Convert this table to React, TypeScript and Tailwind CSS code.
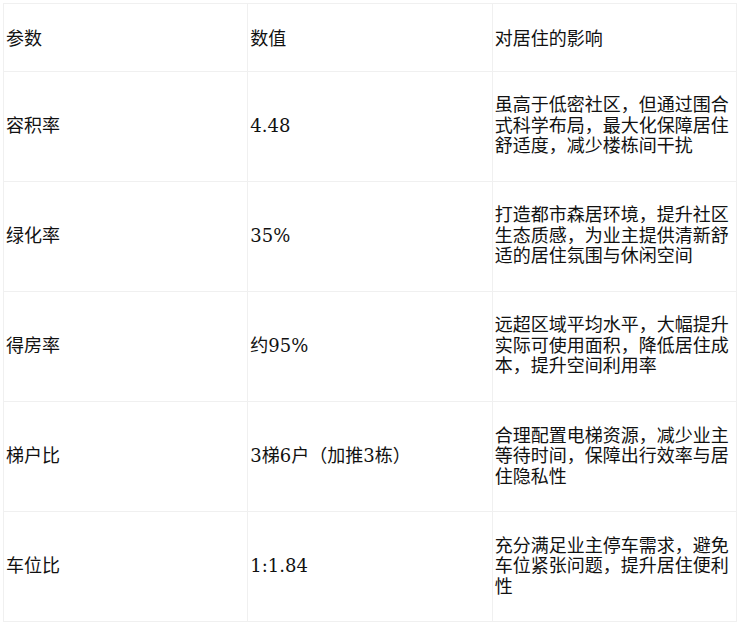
const rows = [
  {
    name: "容积率",
    value: "4.48",
    effect: "虽高于低密社区，但通过围合式科学布局，最大化保障居住舒适度，减少楼栋间干扰",
  },
  {
    name: "绿化率",
    value: "35%",
    effect: "打造都市森居环境，提升社区生态质感，为业主提供清新舒适的居住氛围与休闲空间",
  },
  {
    name: "得房率",
    value: "约95%",
    effect: "远超区域平均水平，大幅提升实际可使用面积，降低居住成本，提升空间利用率",
  },
  {
    name: "梯户比",
    value: "3梯6户（加推3栋）",
    effect: "合理配置电梯资源，减少业主等待时间，保障出行效率与居住隐私性",
  },
  {
    name: "车位比",
    value: "1:1.84",
    effect: "充分满足业主停车需求，避免车位紧张问题，提升居住便利性",
  },
];

const cell = "border border-[#f0f0f0] pl-[2px] pr-[1px] align-middle text-left font-normal";

export default function App() {
  return (
    <div
      className="w-[740px] h-[625px] bg-white p-[3px] text-[18px] leading-[20.5px] text-[#111]"
      style={{ fontFamily: '"DejaVu Serif", "Noto Sans CJK SC", serif' }}
    >
      <table className="w-full table-fixed border-collapse">
        <thead>
          <tr>
            <th className={`${cell} py-[23px]`} style={{ fontFamily: '"Noto Sans CJK SC", sans-serif' }}>参数</th>
            <th className={`${cell} py-[23px]`} style={{ fontFamily: '"Noto Sans CJK SC", sans-serif' }}>数值</th>
            <th className={`${cell} py-[23px]`} style={{ fontFamily: '"Noto Sans CJK SC", sans-serif' }}>对居住的影响</th>
          </tr>
        </thead>
        <tbody>
          {rows.map((r) => (
            <tr key={r.name}>
              <td className={`${cell} py-[23.8px]`}>{r.name}</td>
              <td className={`${cell} py-[23.8px]`}>{r.value}</td>
              <td className={`${cell} py-[23.8px]`}>{r.effect}</td>
            </tr>
          ))}
        </tbody>
      </table>
    </div>
  );
}
